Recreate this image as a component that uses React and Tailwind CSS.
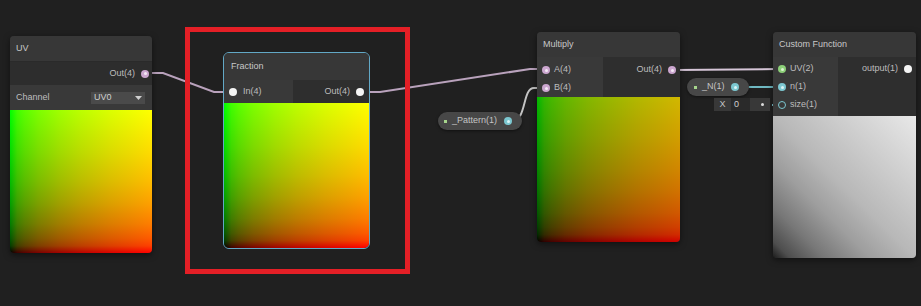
import React from 'react';

// Unity Shader Graph canvas with four nodes, two property pills and wires

function Port({ kind }) {
  if (kind === 'white') {
    return <span className="block w-[8px] h-[8px] shrink-0 rounded-full bg-[#f4f4f4]" />;
  }
  if (kind === 'ring') {
    return <span className="block w-[8px] h-[8px] shrink-0 rounded-full border-[1.5px] border-[#7cc7d0]" />;
  }
  if (kind === 'green') {
    return (
      <span className="flex w-[8px] h-[8px] shrink-0 items-center justify-center rounded-full bg-[#8ccf78]">
        <span className="w-[3px] h-[3px] rounded-full bg-[#dcf3d2]" />
      </span>
    );
  }
  if (kind === 'cyan') {
    return (
      <span className="flex w-[8px] h-[8px] shrink-0 items-center justify-center rounded-full bg-[#7cc7d0]">
        <span className="w-[3px] h-[3px] rounded-full bg-[#dcf4f6]" />
      </span>
    );
  }
  return (
    <span className="flex w-[8px] h-[8px] shrink-0 items-center justify-center rounded-full bg-[#cba6cf]">
      <span className="w-[3px] h-[3px] rounded-full bg-[#f4e9f5]" />
    </span>
  );
}

const uvPreview =
  'bg-[linear-gradient(to_right,#000000_0%,#3f0000_5%,#590000_10%,#7c0000_20%,#a00000_35%,#bc0000_50%,#da0000_70%,#ff0000_100%),linear-gradient(to_top,#000000_0%,#003f00_5%,#005900_10%,#007c00_20%,#00a000_35%,#00bc00_50%,#00da00_70%,#00ff00_100%)] bg-blend-screen';

export default function App() {
  return (
    <div className="relative w-[921px] h-[306px] overflow-hidden bg-[#202020] font-['Liberation_Sans',Arial,sans-serif] text-[9px] text-[#bdbdbd]">
      {/* wires */}
      <svg className="absolute inset-0" width="921" height="306">
        <path d="M148 73 L163 73 L214 92 L230 92" stroke="#b9a2bc" strokeWidth="2" fill="none" />
        <path d="M364 92 L380 92 L530 69 L542 69" stroke="#b9a2bc" strokeWidth="2" fill="none" />
        <path d="M512 121 C527 121 522 88 534 88 L542 88" stroke="#c4c4c4" strokeWidth="2" fill="none" />
        <path d="M675 70 L778 69" stroke="#d6c6d8" strokeWidth="2" fill="none" />
        <path d="M740 87 L778 87" stroke="#6fb9c2" strokeWidth="2" fill="none" />
        <path d="M764 105 L778 105" stroke="#7cc7d0" strokeWidth="2" strokeDasharray="2 2" fill="none" />
      </svg>

      {/* UV */}
      <div className="absolute left-[10px] top-[36px] w-[142px] rounded-[4px] bg-[#2d2d2d] shadow-[0_2px_6px_rgba(0,0,0,0.5)]">
        <div className="h-[25px] flex items-center px-[6px] rounded-t-[4px] bg-[#373737] text-[#c8c8c8]">UV</div>
        <div className="h-[24px] flex items-center justify-end gap-[6px] pr-[3px] bg-[#2d2d2d] border-t border-[#2a2a2a]">
          <span>Out(4)</span>
          <Port kind="pink" />
        </div>
        <div className="h-[25px] flex items-center justify-between pl-[6px] pr-[7px] bg-[#393939]">
          <span>Channel</span>
          <div className="w-[54px] h-[12px] flex items-center justify-between px-[3px] bg-[#4a4a4a] text-[#d0d0d0]">
            <span>UV0</span>
            <svg width="7" height="4" viewBox="0 0 7 4"><path d="M0 0 L7 0 L3.5 4 Z" fill="#d0d0d0" /></svg>
          </div>
        </div>
        <div className={`h-[143px] rounded-b-[4px] ${uvPreview}`} />
      </div>

      {/* Fraction */}
      <div className="absolute left-[223px] top-[52px] w-[147px] rounded-[6px] border border-[#62a8c6] bg-[#2e2e2e] overflow-hidden">
        <div className="h-[27px] flex items-center px-[7px] bg-[#373737] text-[#c8c8c8]">Fraction</div>
        <div className="h-[23px] flex">
          <div className="w-[69px] flex items-center gap-[6px] pl-[5px] bg-[#393939]">
            <Port kind="white" />
            <span>In(4)</span>
          </div>
          <div className="flex-1 flex items-center justify-end gap-[6px] pr-[5px] bg-[#2e2e2e]">
            <span>Out(4)</span>
            <Port kind="white" />
          </div>
        </div>
        <div className={`h-[145px] ${uvPreview}`} />
      </div>

      {/* Multiply */}
      <div className="absolute left-[537px] top-[32px] w-[143px] rounded-[4px] bg-[#2e2e2e] shadow-[0_2px_6px_rgba(0,0,0,0.5)]">
        <div className="h-[25px] flex items-center px-[6px] rounded-t-[4px] bg-[#373737] text-[#c8c8c8]">Multiply</div>
        <div className="h-[40px] flex">
          <div className="w-[66px] flex flex-col pt-[4px] pl-[5px] bg-[#393939]">
            <div className="h-[18px] flex items-center gap-[4px]">
              <Port kind="pink" />
              <span>A(4)</span>
            </div>
            <div className="h-[18px] flex items-center gap-[4px]">
              <Port kind="pink" />
              <span>B(4)</span>
            </div>
          </div>
          <div className="flex-1 pt-[4px] pr-[4px]">
            <div className="h-[18px] flex items-center justify-end gap-[6px]">
              <span>Out(4)</span>
              <Port kind="pink" />
            </div>
          </div>
        </div>
        <div className="h-[145px] rounded-b-[4px] bg-[linear-gradient(to_right,#000000_0%,#300000_5%,#460000_10%,#640000_20%,#820000_35%,#980000_50%,#b20000_70%,#d20000_100%),linear-gradient(to_top,#000000_0%,#002a00_5%,#003e00_10%,#005800_20%,#007200_35%,#008600_50%,#009c00_70%,#00b800_100%)] bg-blend-screen" />
      </div>

      {/* Custom Function */}
      <div className="absolute left-[773px] top-[32px] w-[143px] rounded-[4px] bg-[#2e2e2e] shadow-[0_2px_6px_rgba(0,0,0,0.5)]">
        <div className="h-[25px] flex items-center px-[6px] rounded-t-[4px] bg-[#373737] text-[#c8c8c8]">Custom Function</div>
        <div className="h-[59px] flex">
          <div className="w-[65px] flex flex-col pt-[3px] pl-[5px] bg-[#393939]">
            <div className="h-[18px] flex items-center gap-[4px]">
              <Port kind="green" />
              <span>UV(2)</span>
            </div>
            <div className="h-[18px] flex items-center gap-[4px]">
              <Port kind="cyan" />
              <span>n(1)</span>
            </div>
            <div className="h-[18px] flex items-center gap-[4px]">
              <Port kind="ring" />
              <span>size(1)</span>
            </div>
          </div>
          <div className="flex-1 pt-[3px] pr-[4px]">
            <div className="h-[18px] flex items-center justify-end gap-[6px]">
              <span>output(1)</span>
              <Port kind="white" />
            </div>
          </div>
        </div>
        <div className="h-[142px] rounded-b-[4px] bg-[linear-gradient(to_top_right,#1c1c1c_0%,#4e4e4e_6%,#777777_18%,#9e9e9e_34%,#b8b8b8_50%,#d0d0d0_75%,#e8e8e8_100%)]" />
      </div>

      {/* _Pattern(1) property */}
      <div className="absolute left-[438px] top-[112px] w-[84px] h-[18px] flex items-center rounded-full bg-[#474747] pl-[6px] pr-[10px] shadow-[0_1px_3px_rgba(0,0,0,0.5)]">
        <span className="w-[3px] h-[3px] bg-[#a6d58c]" />
        <span className="ml-[5px] flex-1 text-[#c4c4c4]">_Pattern(1)</span>
        <Port kind="cyan" />
      </div>

      {/* _N(1) property */}
      <div className="absolute left-[687px] top-[78px] w-[62px] h-[18px] flex items-center rounded-full bg-[#474747] pl-[7px] pr-[10px] shadow-[0_1px_3px_rgba(0,0,0,0.5)]">
        <span className="w-[3px] h-[3px] bg-[#a6d58c]" />
        <span className="ml-[5px] flex-1 text-[#c4c4c4]">_N(1)</span>
        <Port kind="cyan" />
      </div>

      {/* size default value */}
      <div className="absolute left-[714px] top-[98px] w-[56px] h-[13px] flex items-center bg-[#383838]">
        <span className="w-[17px] text-center text-[#c4c4c4]">X</span>
        <span className="w-[19px] h-full flex items-center pl-[3px] bg-[#2a2a2a] text-[#d0d0d0]">0</span>
        <span className="ml-auto mr-[6px] w-[3px] h-[3px] rounded-full bg-[#dcdcdc]" />
      </div>

      {/* highlight box */}
      <div className="absolute left-[185px] top-[27px] w-[225px] h-[247px] border-[5px] border-[#e41f26]" />
    </div>
  );
}
